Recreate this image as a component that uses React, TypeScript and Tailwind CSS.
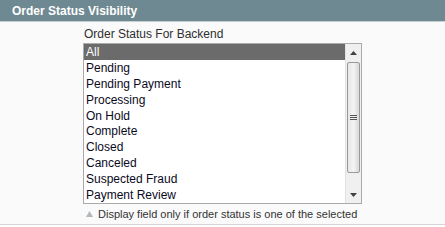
import React from "react";

const items = [
  "All",
  "Pending",
  "Pending Payment",
  "Processing",
  "On Hold",
  "Complete",
  "Closed",
  "Canceled",
  "Suspected Fraud",
  "Payment Review",
];

export default function App() {
  return (
    <div
      className="w-[445px] h-[227px] bg-white overflow-hidden"
      style={{ fontFamily: '"Liberation Sans", Arial, sans-serif' }}
    >
      <div className="h-[22px] bg-[#6f8992] border-b border-[#c6d0d3] flex items-center pl-[12px]">
        <span className="text-white font-bold text-[12px] leading-none">Order Status Visibility</span>
      </div>
      <div className="h-[203px] bg-[#fafafa] border-b border-[#d6d6d6] pl-[83px] pt-[4px]">
        <div className="text-[12px] leading-[16px] text-[#2f2f2f] pl-[1px]">Order Status For Backend</div>
        <div className="mt-[1px] w-[279px] h-[161px] border border-[#aaa] bg-white flex overflow-hidden">
          <div className="flex-1 flex flex-col">
            {items.map((it, i) => (
              <div
                key={it}
                className={`h-[15.9px] shrink-0 leading-[16px] text-[12px] pl-[2px] ${
                  i === 0 ? "bg-[#6b6b6b] text-white" : "text-[#0a0a1e]"
                }`}
              >
                {it}
              </div>
            ))}
          </div>
          <div className="w-[16px] bg-[#f0f0f0] border-l border-[#e2e2e2] flex flex-col">
            <div className="h-[17px] flex items-center justify-center">
              <svg width="7" height="4" viewBox="0 0 7 4">
                <path d="M3.5 0 L7 4 L0 4 Z" fill="#404040" />
              </svg>
            </div>
            <div className="mx-[1px] mt-[1px] h-[111px] rounded-[2px] border border-[#9a9a9a] bg-gradient-to-r from-[#e6e6e6] via-[#f4f4f4] to-[#d8d8d8] flex items-center justify-center">
              <div className="flex flex-col gap-[1px]">
                <div className="w-[7px] h-[1px] bg-[#555]" />
                <div className="w-[7px] h-[1px] bg-[#555]" />
                <div className="w-[7px] h-[1px] bg-[#555]" />
              </div>
            </div>
            <div className="flex-1" />
            <div className="h-[17px] flex items-center justify-center">
              <svg width="7" height="4" viewBox="0 0 7 4">
                <path d="M0 0 L7 0 L3.5 4 Z" fill="#404040" />
              </svg>
            </div>
          </div>
        </div>
        <div className="mt-[3px] flex items-center gap-[5px] pl-[3px] text-[11px] leading-[14px] text-[#333]">
          <svg width="7" height="6" viewBox="0 0 7 6">
            <path d="M3.5 0 L7 6 L0 6 Z" fill="#b0b8bd" />
          </svg>
          <span>Display field only if order status is one of the selected</span>
        </div>
      </div>
    </div>
  );
}
